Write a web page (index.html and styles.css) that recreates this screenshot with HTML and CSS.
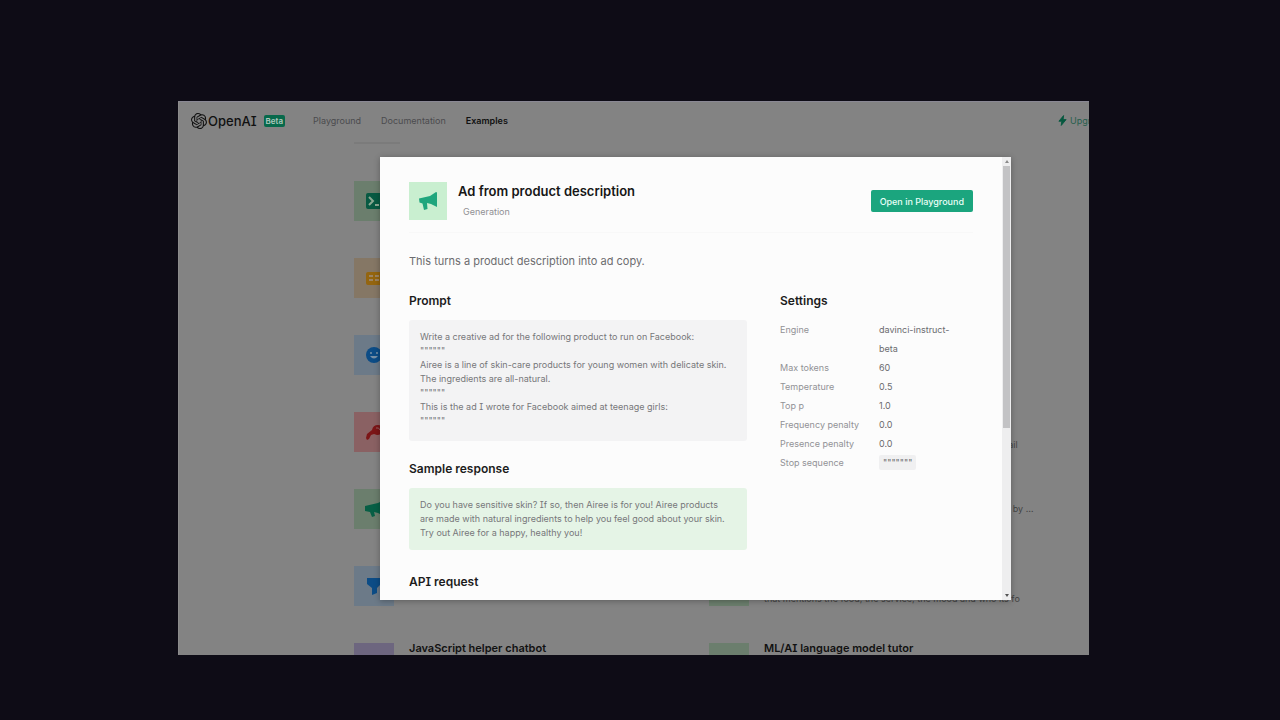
FILE: index.html
```html
<!DOCTYPE html>
<html lang="en">
  <head>
    <meta charset="UTF-8">
    <title>Examples - OpenAI API</title>
    <link rel="stylesheet" href="styles.css">
  </head>
  <body>
    <div class="window">
      <header class="topbar">
        <a class="logo" href="#">
          <svg viewBox="0 0 24 24" width="16" height="16" fill="currentColor"><path d="M22.2819 9.8211a5.9847 5.9847 0 0 0-.5157-4.9108 6.0462 6.0462 0 0 0-6.5098-2.9A6.0651 6.0651 0 0 0 4.9807 4.1818a5.9847 5.9847 0 0 0-3.9977 2.9 6.0462 6.0462 0 0 0 .7427 7.0966 5.98 5.98 0 0 0 .511 4.9107 6.051 6.051 0 0 0 6.5146 2.9001A5.9847 5.9847 0 0 0 13.2599 24a6.0557 6.0557 0 0 0 5.7718-4.2058 5.9894 5.9894 0 0 0 3.9977-2.9001 6.0557 6.0557 0 0 0-.7475-7.0729zm-9.022 12.6081a4.4755 4.4755 0 0 1-2.8764-1.0408l.1419-.0804 4.7783-2.7582a.7948.7948 0 0 0 .3927-.6813v-6.7369l2.02 1.1686a.071.071 0 0 1 .038.052v5.5826a4.504 4.504 0 0 1-4.4945 4.4944zm-9.6607-4.1254a4.4708 4.4708 0 0 1-.5346-3.0137l.142.0852 4.783 2.7582a.7712.7712 0 0 0 .7806 0l5.8428-3.3685v2.3324a.0804.0804 0 0 1-.0332.0615L9.74 19.9502a4.4992 4.4992 0 0 1-6.1408-1.6464zM2.3408 7.8956a4.485 4.485 0 0 1 2.3655-1.9728V11.6a.7664.7664 0 0 0 .3879.6765l5.8144 3.3543-2.0201 1.1685a.0757.0757 0 0 1-.071 0l-4.8303-2.7865A4.504 4.504 0 0 1 2.3408 7.872zm16.5963 3.8558L13.1038 8.364 15.1192 7.2a.0757.0757 0 0 1 .071 0l4.8303 2.7913a4.4944 4.4944 0 0 1-.6765 8.1042v-5.6772a.79.79 0 0 0-.407-.667zm2.0107-3.0231l-.142-.0852-4.7735-2.7818a.7759.7759 0 0 0-.7854 0L9.409 9.2297V6.8974a.0662.0662 0 0 1 .0284-.0615l4.8303-2.7866a4.4992 4.4992 0 0 1 6.6802 4.66zM8.3065 12.863l-2.02-1.1638a.0804.0804 0 0 1-.038-.0567V6.0742a4.4992 4.4992 0 0 1 7.3757-3.4537l-.142.0805L8.704 5.459a.7948.7948 0 0 0-.3927.6813zm1.0976-2.3654l2.602-1.4998 2.6069 1.4998v2.9994l-2.5974 1.4997-2.6067-1.4997Z"/></svg>
          <span>OpenAI</span>
        </a>
        <span class="beta">Beta</span>
        <nav class="nav">
          <a href="#">Playground</a>
          <a href="#">Documentation</a>
          <a class="active" href="#">Examples</a>
        </nav>
        <a class="upgrade" href="#">
          <svg viewBox="0 0 10 12" width="9" height="11"><path d="M6.200 0.500 1 6.800h3.200L3.600 11.500 9 5H5.700z" fill="#06583f" stroke="#06583f"/></svg>
          <span>Upgrade</span>
        </a>
      </header>
      <div class="tab-line"></div>

      <main class="examples">
        <a class="example" href="#">
          <span class="tile green"><svg viewBox="0 0 18 18" width="18" height="18"><rect x="1" y="1" width="16" height="16" rx="2" fill="#075a42"/><path d="M4 5l4 4-4 4M10 13h4" fill="none" stroke="#8aa892" stroke-width="2"/></svg></span>
        </a>
        <a class="example" href="#"></a>
        <a class="example" href="#">
          <span class="tile orange"><svg viewBox="0 0 18 18" width="18" height="18"><rect x="1" y="3" width="16" height="13" rx="2" fill="#94650f"/><path d="M4 7h4M10 7h4M4 11h4M10 11h4" stroke="#9c8463" stroke-width="2"/></svg></span>
        </a>
        <a class="example" href="#"></a>
        <a class="example" href="#">
          <span class="tile blue"><svg viewBox="0 0 18 18" width="18" height="18"><circle cx="9" cy="9" r="8" fill="#0c4c86"/><path d="M5 10q4 5 8 0z" fill="#7890a5"/><circle cx="6" cy="7" r="1" fill="#7890a5"/><circle cx="12" cy="7" r="1" fill="#7890a5"/></svg></span>
        </a>
        <a class="example" href="#"></a>
        <a class="example" href="#">
          <span class="tile red"><svg viewBox="0 0 18 18" width="18" height="18"><path d="M1 15l1-4 5-4q1-5 6-5 4 0 4 5t-5 5l-3-1-3 1-2 4-2 1z" fill="#7c1517"/><path d="M11 5q3-1 4 2" fill="none" stroke="#936062" stroke-width="1"/></svg></span>
        </a>
        <a class="example" href="#">
          <span class="about"><small>Extract the key facts from a long article<br>and later send each point of those in a short follow up email</small></span>
        </a>
        <a class="example" href="#">
          <span class="tile green"><svg viewBox="0 0 20 18" width="20" height="18"><path d="M1 6l13-3 4-2v14l-4-2-4-1 1 4-3 1-2-5-5-1z" fill="#075f45"/></svg></span>
        </a>
        <a class="example" href="#">
          <span class="about"><small>Create a short list of all items for any given topic, followed by …</small></span>
        </a>
        <a class="example" href="#">
          <span class="tile blue"><svg viewBox="0 0 18 18" width="18" height="18"><path d="M2 1h14v6l-4 4v5l-5 2v-7L2 7z" fill="#0c4c86"/></svg></span>
        </a>
        <a class="example" href="#">
          <span class="tile green"></span>
          <span class="about"><small>Turn a few words into a restaurant review<br>that mentions the food, the service, the mood and who its fo</small></span>
        </a>
        <a class="example" href="#">
          <span class="tile purple"><svg viewBox="0 0 18 18" width="18" height="18"><path d="M2 1h14v10H8l-4 3v-3H2z" fill="#3c2c68"/></svg></span>
          <span class="about"><strong>JavaScript helper chatbot</strong></span>
        </a>
        <a class="example" href="#">
          <span class="tile green"><svg viewBox="0 0 18 18" width="18" height="18"><path d="M2 1h14v10H8l-4 3v-3H2z" fill="#07452f"/></svg></span>
          <span class="about"><strong>ML/AI language model tutor</strong></span>
        </a>
      </main>

      <section class="modal">
        <div class="content">
          <div class="heading">
            <span class="icon"><svg viewBox="0 0 20 20" width="20" height="20"><path d="M1 7.500l11-2.500 6-4q1 0 1 1v14l-6-3-4-1 .5 6-3.500 1-1.500-6.500-3-1z" fill="#1fa67d"/></svg></span>
            <div class="name">
              <h1>Ad from product description</h1>
              <span class="category">Generation</span>
            </div>
            <button class="open">Open in Playground</button>
          </div>
          <p class="intro">This turns a product description into ad copy.</p>
          <div class="columns">
            <div class="main-column">
              <h2>Prompt</h2>
              <pre class="prompt">Write a creative ad for the following product to run on Facebook:
""""""
Airee is a line of skin-care products for young women with delicate skin. The ingredients are all-natural.
""""""
This is the ad I wrote for Facebook aimed at teenage girls:
""""""</pre>
              <h2>Sample response</h2>
              <p class="response">Do you have sensitive skin? If so, then Airee is for you! Airee products are made with natural ingredients to help you feel good about your skin. Try out Airee for a happy, healthy you!</p>
              <h2>API request</h2>
            </div>
            <div class="side-column">
              <h2>Settings</h2>
              <dl class="settings">
                <dt>Engine</dt><dd>davinci-instruct-beta</dd>
                <dt>Max tokens</dt><dd>60</dd>
                <dt>Temperature</dt><dd>0.5</dd>
                <dt>Top p</dt><dd>1.0</dd>
                <dt>Frequency penalty</dt><dd>0.0</dd>
                <dt>Presence penalty</dt><dd>0.0</dd>
                <dt>Stop sequence</dt><dd><code>"""""""</code></dd>
              </dl>
            </div>
          </div>
        </div>
        <div class="scrollbar">
          <span class="arrow up"></span>
          <span class="thumb"></span>
          <span class="arrow down"></span>
        </div>
      </section>
    </div>
  </body>
</html>
```
FILE: styles.css
```css
* {
  box-sizing: border-box;
}

body {
  margin: 0;
  height: 100vh;
  padding: 101px 191px 65px 178px;
  background: #0e0c16;
  font-family: Inter, "Liberation Sans", sans-serif;
  font-feature-settings: "cv08";
}

h1, h2, p, dl, dd, pre {
  margin: 0;
}

a {
  color: inherit;
  text-decoration: none;
}

.window {
  position: relative;
  height: 100%;
  overflow: hidden;
  background: #838383;
  border-top: 1px solid #8a8894;
  border-left: 1px solid #8c8c8c;
}

.topbar {
  display: flex;
  align-items: center;
  height: 37px;
  padding-left: 12px;
  font-size: 9px;
  color: #4b4b4e;
  white-space: nowrap;
}

.logo {
  display: flex;
  align-items: center;
  gap: 1px;
  font-size: 13px;
  font-weight: 500;
  color: #111;
}

.beta {
  margin-left: 7px;
  padding: 0 2px;
  border-radius: 2px;
  background: #07694b;
  color: #b0c9bf;
  font-size: 8px;
  font-weight: 600;
  line-height: 12px;
}

.nav {
  display: flex;
  gap: 20px;
  margin-left: 28px;
}

.nav .active {
  color: #111;
  font-weight: 600;
}

.upgrade {
  display: flex;
  align-items: center;
  gap: 3px;
  width: 31px;
  margin-left: auto;
  color: #285f4e;
}

.upgrade svg {
  flex: none;
}

.tab-line {
  width: 46px;
  height: 2px;
  margin: 3px 0 0 175px;
  background: #7b7b7b;
}

.examples {
  display: grid;
  grid-template-columns: 1fr 1fr;
  grid-auto-rows: 77px;
  padding: 37px 25px 0 175px;
}

.example {
  display: flex;
  gap: 15px;
}

.example .about:first-child {
  margin-left: 55px;
}

.tile {
  flex: none;
  display: flex;
  align-items: center;
  justify-content: center;
  width: 40px;
  height: 40px;
}

.green { background: #6b7e6d; }
.orange { background: #857765; }
.blue { background: #6c7a88; }
.red { background: #8a6163; }
.purple { background: #6d667f; }

.about {
  color: #111;
  white-space: nowrap;
}

.about strong {
  display: block;
  font-size: 11px;
  font-weight: 600;
  line-height: 11px;
}

.about small {
  display: block;
  padding-top: 13px;
  color: #444;
  font-size: 9px;
  line-height: 13px;
}

.modal {
  position: absolute;
  top: 55px;
  right: 78px;
  bottom: 55px;
  left: 201px;
  display: flex;
  background: #fcfcfc;
  box-shadow: 0 1px 6px rgba(0, 0, 0, 0.3);
}

.content {
  flex: 1;
  overflow: hidden;
  padding: 25px 29px 0;
}

.heading {
  display: flex;
  align-items: center;
}

.icon {
  display: flex;
  align-items: center;
  justify-content: center;
  width: 38px;
  height: 38px;
  background: #c9efd0;
}

.name {
  flex: 1;
  padding-left: 11px;
}

h1 {
  font-size: 13px;
  font-weight: 600;
  line-height: 18px;
  color: #161616;
}

.category {
  display: block;
  padding: 4px 5px 0;
  color: #909094;
  font-size: 9px;
  line-height: 16px;
}

.open {
  height: 22px;
  padding: 0 9px;
  border: 0;
  border-radius: 2px;
  background: #1ba57e;
  color: #eafff7;
  font: inherit;
  font-size: 9px;
  font-weight: 500;
}

.intro {
  margin-top: 12px;
  padding-top: 19px;
  border-top: 1px solid #f8f8f8;
  color: #6c6c6f;
  font-size: 11px;
  line-height: 18px;
}

.columns {
  display: flex;
  gap: 33px;
  margin-top: 22px;
}

.main-column {
  flex: 1;
}

.side-column {
  width: 193px;
}

h2 {
  color: #1c1c1c;
  font-size: 12px;
  font-weight: 600;
  line-height: 18px;
}

.prompt, .response {
  margin: 10px 0 19px;
  padding: 10px 16px 13px 11px;
  border-radius: 3px;
  background: #f3f3f4;
  color: #77777a;
  font-family: inherit;
  font-size: 9px;
  line-height: 14px;
  white-space: pre-wrap;
}

.response {
  padding-bottom: 10px;
  margin-bottom: 23px;
  background: #e5f4e6;
}

.settings {
  display: grid;
  grid-template-columns: 99px 78px;
  margin-top: 10px;
  font-size: 9px;
  line-height: 19px;
}

dt {
  color: #929296;
}

dd {
  color: #6b6b6e;
}

dd code {
  padding: 2px 4px;
  border-radius: 2px;
  background: #f0f0f1;
  font-family: inherit;
}

.scrollbar {
  display: flex;
  flex-direction: column;
  align-items: center;
  width: 9px;
  padding: 3px 1px;
  background: #eeeeef;
}

.thumb {
  width: 7px;
  height: 60%;
  margin-top: 3px;
  background: #c3c3c5;
}

.arrow {
  border: 2px solid transparent;
}

.up {
  border-top: 0;
  border-bottom: 3px solid #8a8a8a;
}

.down {
  margin-top: auto;
  border-bottom: 0;
  border-top: 3px solid #555;
}
```
